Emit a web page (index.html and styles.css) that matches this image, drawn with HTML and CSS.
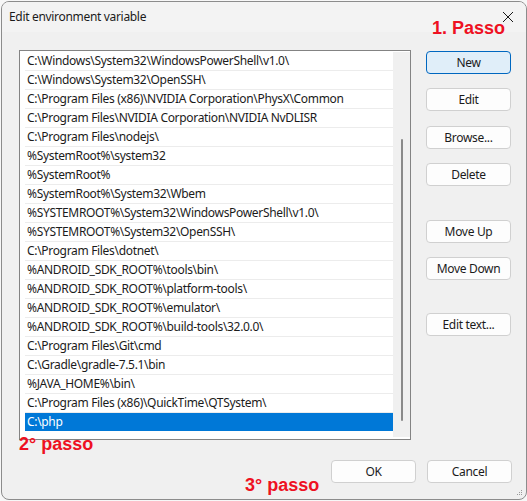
FILE: index.html
```html
<!DOCTYPE html>
<html lang="en">
<head>
<meta charset="utf-8">
<title>Edit environment variable</title>
<link rel="stylesheet" href="styles.css">
</head>
<body>
<div class="window">
  <div class="titlebar">
    <span class="title">Edit environment variable</span>
    <span class="close" aria-label="Close">
      <svg width="12" height="12" viewBox="0 0 12 12"><path d="M1 1 L11 11 M11 1 L1 11" stroke="#1a1a1a" stroke-width="1" fill="none"/></svg>
    </span>
  </div>
  <div class="body">
    <div class="list">
      <ul class="items">
        <li>C:\Windows\System32\WindowsPowerShell\v1.0\</li>
        <li>C:\Windows\System32\OpenSSH\</li>
        <li>C:\Program Files (x86)\NVIDIA Corporation\PhysX\Common</li>
        <li>C:\Program Files\NVIDIA Corporation\NVIDIA NvDLISR</li>
        <li>C:\Program Files\nodejs\</li>
        <li>%SystemRoot%\system32</li>
        <li>%SystemRoot%</li>
        <li>%SystemRoot%\System32\Wbem</li>
        <li>%SYSTEMROOT%\System32\WindowsPowerShell\v1.0\</li>
        <li>%SYSTEMROOT%\System32\OpenSSH\</li>
        <li>C:\Program Files\dotnet\</li>
        <li>%ANDROID_SDK_ROOT%\tools\bin\</li>
        <li>%ANDROID_SDK_ROOT%\platform-tools\</li>
        <li>%ANDROID_SDK_ROOT%\emulator\</li>
        <li>%ANDROID_SDK_ROOT%\build-tools\32.0.0\</li>
        <li>C:\Program Files\Git\cmd</li>
        <li>C:\Gradle\gradle-7.5.1\bin</li>
        <li>%JAVA_HOME%\bin\</li>
        <li>C:\Program Files (x86)\QuickTime\QTSystem\</li>
        <li class="selected">C:\php</li>
      </ul>
      <div class="scrollbar"><div class="thumb"></div></div>
    </div>
    <div class="side">
      <button class="btn primary">New</button>
      <button class="btn s-edit">Edit</button>
      <button class="btn s-browse">Browse...</button>
      <button class="btn s-delete">Delete</button>
      <button class="btn s-up">Move Up</button>
      <button class="btn s-down">Move Down</button>
      <button class="btn s-text">Edit text...</button>
    </div>
  </div>
  <div class="footer">
    <button class="btn">OK</button>
    <button class="btn">Cancel</button>
  </div>
  <span class="note note-1">1. Passo</span>
  <span class="note note-2">2° passo</span>
  <span class="note note-3">3° passo</span>
  <svg class="grip" width="6" height="6" viewBox="0 0 6 6">
    <rect x="4" y="0" width="1" height="1" fill="#9a9a9a"/>
    <rect x="2" y="2" width="1" height="1" fill="#9a9a9a"/>
    <rect x="4" y="2" width="1" height="1" fill="#9a9a9a"/>
    <rect x="0" y="4" width="1" height="1" fill="#9a9a9a"/>
    <rect x="2" y="4" width="1" height="1" fill="#9a9a9a"/>
    <rect x="4" y="4" width="1" height="1" fill="#9a9a9a"/>
  </svg>
</div>
</body>
</html>
```
FILE: styles.css
```css
html, body {
  margin: 0;
  padding: 0;
  background: #f7f7f7;
}

body {
  width: 527px;
  height: 501px;
  overflow: hidden;
  font-family: "Noto Sans", "Open Sans", sans-serif;
  font-size: 12px;
  letter-spacing: -0.32px;
  color: #1b1b1b;
}

.window {
  position: relative;
  box-sizing: border-box;
  margin: 1px 0 0 1px;
  width: 526px;
  height: 499px;
  border: 1px solid #8c8c8c;
  border-radius: 8px;
  background: #f0f0f0;
  display: flex;
  flex-direction: column;
  overflow: hidden;
}

.titlebar {
  height: 30px;
  flex: none;
  display: flex;
  align-items: center;
  justify-content: space-between;
  padding: 0 12px 0 7px;
  background: #f3f3f3;
}

.title {
  font-size: 12px;
  line-height: 16px;
  margin-top: -1px;
}

.close {
  display: flex;
  width: 12px;
  height: 12px;
}

.body {
  flex: none;
  display: flex;
  gap: 15px;
  padding: 18px 0 0 17px;
}

.list {
  box-sizing: border-box;
  width: 392px;
  height: 390px;
  border: 1px solid #838383;
  background: #ffffff;
  display: flex;
}

.items {
  list-style: none;
  margin: 0;
  padding: 1px 0 0 5px;
  width: 368px;
}

.items li {
  height: 18px;
  line-height: 18px;
  padding-left: 2px;
  border-bottom: 1px solid #ececec;
  white-space: nowrap;
  overflow: hidden;
}

.items li.selected {
  background: #0078d7;
  color: #ffffff;
  border-bottom-color: #ffffff;
}

.scrollbar {
  width: 17px;
  margin: 1px 0 2px 0;
  background: #f0f0f0;
  display: flex;
  justify-content: center;
}

.thumb {
  width: 2px;
  height: 282px;
  margin-top: 87px;
  background: #8a8a8a;
  border-radius: 1px;
}

.side {
  display: flex;
  flex-direction: column;
  width: 85px;
  padding-top: 1px;
}

.btn {
  box-sizing: border-box;
  width: 85px;
  height: 23px;
  padding: 0;
  border: 1px solid #d0d0d0;
  border-radius: 4px;
  background: #fdfdfd;
  font-family: inherit;
  font-size: 12px;
  letter-spacing: inherit;
  line-height: 21px;
  color: #1b1b1b;
}

.btn.primary {
  background: #e0eef9;
  border-color: #0067c0;
}

.s-edit { margin-top: 14px; }
.s-browse { margin-top: 15px; }
.s-delete { margin-top: 14px; }
.s-up { margin-top: 34px; }
.s-down { margin-top: 14px; }
.s-text { margin-top: 33px; }

.footer {
  display: flex;
  justify-content: flex-end;
  gap: 11px;
  padding: 20px 14px 0 0;
}

.note {
  position: absolute;
  font-family: "Liberation Sans", Arial, sans-serif;
  font-weight: bold;
  font-size: 18px;
  letter-spacing: 0;
  line-height: 20px;
  color: #ee1122;
  white-space: nowrap;
}

.note-1 { left: 430px; top: 16px; }
.note-2 { left: 17px; top: 432px; }
.note-3 { left: 243px; top: 473px; }

.grip {
  position: absolute;
  right: 3px;
  bottom: 3px;
}
```
